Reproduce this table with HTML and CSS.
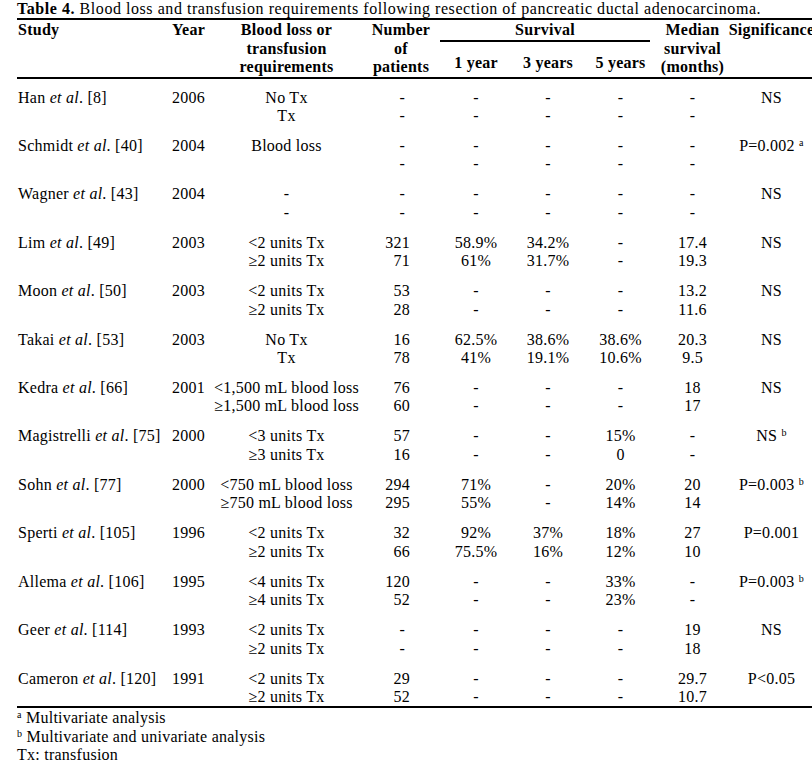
FILE: index.html
```html
<!DOCTYPE html>
<html>
<head>
<meta charset="utf-8">
<link rel="stylesheet" href="styles.css">
</head>
<body>
<div class="page">
  <div class="caption"><b>Table 4.</b> Blood loss and transfusion requirements following resection of pancreatic ductal adenocarcinoma.</div>
  <table class="tbl">
    <colgroup>
      <col class="w-study"><col class="w-year"><col class="w-blood"><col class="w-num">
      <col class="w-s"><col class="w-s"><col class="w-s5"><col class="w-med"><col class="w-sig">
    </colgroup>
    <thead>
      <tr>
        <th rowspan="2" class="c-study">Study</th>
        <th rowspan="2" class="c-year">Year</th>
        <th rowspan="2" class="c-ctr">Blood loss or<br>transfusion<br>requirements</th>
        <th rowspan="2" class="c-numh">Number<br>of<br>patients</th>
        <th colspan="3" class="c-surv"><div class="surv-label">Survival</div></th>
        <th rowspan="2" class="c-ctr">Median<br>survival<br>(months)</th>
        <th rowspan="2" class="c-ctr">Significance</th>
      </tr>
      <tr class="sub">
        <th class="c-ctr">1 year</th>
        <th class="c-ctr">3 years</th>
        <th class="c-ctr">5 years</th>
      </tr>
    </thead>
    <tbody>
      <tr>
        <td class="c-study">Han <i>et al</i>. [8]</td><td class="c-year">2006</td>
        <td class="c-ctr">No Tx<br>Tx</td><td class="c-num nd">-<br>-</td>
        <td class="c-ctr">-<br>-</td><td class="c-ctr">-<br>-</td><td class="c-ctr">-<br>-</td><td class="c-ctr">-<br>-</td>
        <td class="c-ctr">NS</td>
      </tr>
      <tr>
        <td class="c-study">Schmidt <i>et al</i>. [40]</td><td class="c-year">2004</td>
        <td class="c-ctr">Blood loss<br>&nbsp;</td><td class="c-num nd">-<br>-</td>
        <td class="c-ctr">-<br>-</td><td class="c-ctr">-<br>-</td><td class="c-ctr">-<br>-</td><td class="c-ctr">-<br>-</td>
        <td class="c-ctr">P=0.002 <sup class="fn">a</sup></td>
      </tr>
      <tr>
        <td class="c-study">Wagner <i>et al</i>. [43]</td><td class="c-year">2004</td>
        <td class="c-ctr">-<br>-</td><td class="c-num nd">-<br>-</td>
        <td class="c-ctr">-<br>-</td><td class="c-ctr">-<br>-</td><td class="c-ctr">-<br>-</td><td class="c-ctr">-<br>-</td>
        <td class="c-ctr">NS</td>
      </tr>
      <tr>
        <td class="c-study">Lim <i>et al</i>. [49]</td><td class="c-year">2003</td>
        <td class="c-ctr">&lt;2 units Tx<br>≥2 units Tx</td><td class="c-num">321<br>71</td>
        <td class="c-ctr">58.9%<br>61%</td><td class="c-ctr">34.2%<br>31.7%</td><td class="c-ctr">-<br>-</td><td class="c-ctr">17.4<br>19.3</td>
        <td class="c-ctr">NS</td>
      </tr>
      <tr>
        <td class="c-study">Moon <i>et al</i>. [50]</td><td class="c-year">2003</td>
        <td class="c-ctr">&lt;2 units Tx<br>≥2 units Tx</td><td class="c-num">53<br>28</td>
        <td class="c-ctr">-<br>-</td><td class="c-ctr">-<br>-</td><td class="c-ctr">-<br>-</td><td class="c-ctr">13.2<br>11.6</td>
        <td class="c-ctr">NS</td>
      </tr>
      <tr>
        <td class="c-study">Takai <i>et al</i>. [53]</td><td class="c-year">2003</td>
        <td class="c-ctr">No Tx<br>Tx</td><td class="c-num">16<br>78</td>
        <td class="c-ctr">62.5%<br>41%</td><td class="c-ctr">38.6%<br>19.1%</td><td class="c-ctr">38.6%<br>10.6%</td><td class="c-ctr">20.3<br>9.5</td>
        <td class="c-ctr">NS</td>
      </tr>
      <tr>
        <td class="c-study">Kedra <i>et al</i>. [66]</td><td class="c-year">2001</td>
        <td class="c-ctr">&lt;1,500 mL blood loss<br>≥1,500 mL blood loss</td><td class="c-num">76<br>60</td>
        <td class="c-ctr">-<br>-</td><td class="c-ctr">-<br>-</td><td class="c-ctr">-<br>-</td><td class="c-ctr">18<br>17</td>
        <td class="c-ctr">NS</td>
      </tr>
      <tr>
        <td class="c-study">Magistrelli <i>et al</i>. [75]</td><td class="c-year">2000</td>
        <td class="c-ctr">&lt;3 units Tx<br>≥3 units Tx</td><td class="c-num">57<br>16</td>
        <td class="c-ctr">-<br>-</td><td class="c-ctr">-<br>-</td><td class="c-ctr">15%<br>0</td><td class="c-ctr">-<br>-</td>
        <td class="c-ctr">NS <sup class="fn">b</sup></td>
      </tr>
      <tr>
        <td class="c-study">Sohn <i>et al</i>. [77]</td><td class="c-year">2000</td>
        <td class="c-ctr">&lt;750 mL blood loss<br>≥750 mL blood loss</td><td class="c-num">294<br>295</td>
        <td class="c-ctr">71%<br>55%</td><td class="c-ctr">-<br>-</td><td class="c-ctr">20%<br>14%</td><td class="c-ctr">20<br>14</td>
        <td class="c-ctr">P=0.003 <sup class="fn">b</sup></td>
      </tr>
      <tr>
        <td class="c-study">Sperti <i>et al</i>. [105]</td><td class="c-year">1996</td>
        <td class="c-ctr">&lt;2 units Tx<br>≥2 units Tx</td><td class="c-num">32<br>66</td>
        <td class="c-ctr">92%<br>75.5%</td><td class="c-ctr">37%<br>16%</td><td class="c-ctr">18%<br>12%</td><td class="c-ctr">27<br>10</td>
        <td class="c-ctr">P=0.001</td>
      </tr>
      <tr>
        <td class="c-study">Allema <i>et al</i>. [106]</td><td class="c-year">1995</td>
        <td class="c-ctr">&lt;4 units Tx<br>≥4 units Tx</td><td class="c-num">120<br>52</td>
        <td class="c-ctr">-<br>-</td><td class="c-ctr">-<br>-</td><td class="c-ctr">33%<br>23%</td><td class="c-ctr">-<br>-</td>
        <td class="c-ctr">P=0.003 <sup class="fn">b</sup></td>
      </tr>
      <tr>
        <td class="c-study">Geer <i>et al</i>. [114]</td><td class="c-year">1993</td>
        <td class="c-ctr">&lt;2 units Tx<br>≥2 units Tx</td><td class="c-num nd">-<br>-</td>
        <td class="c-ctr">-<br>-</td><td class="c-ctr">-<br>-</td><td class="c-ctr">-<br>-</td><td class="c-ctr">19<br>18</td>
        <td class="c-ctr">NS</td>
      </tr>
      <tr>
        <td class="c-study">Cameron <i>et al</i>. [120]</td><td class="c-year">1991</td>
        <td class="c-ctr">&lt;2 units Tx<br>≥2 units Tx</td><td class="c-num">29<br>52</td>
        <td class="c-ctr">-<br>-</td><td class="c-ctr">-<br>-</td><td class="c-ctr">-<br>-</td><td class="c-ctr">29.7<br>10.7</td>
        <td class="c-ctr">P&lt;0.05</td>
      </tr>
    </tbody>
  </table>
  <div class="notes">
    <div><sup class="fn">a</sup> Multivariate analysis</div>
    <div><sup class="fn">b</sup> Multivariate and univariate analysis</div>
    <div>Tx: transfusion</div>
  </div>
</div>
</body>
</html>
```

FILE: styles.css
```css
html, body {
  margin: 0;
  padding: 0;
  background: #fff;
  overflow: hidden;
}

.page {
  padding-left: 17px;
  font-family: "Liberation Serif", "Times New Roman", serif;
  font-size: 16px;
  line-height: 18.4px;
  letter-spacing: 0.25px;
  color: #000;
  width: 900px;
}

.caption {
  white-space: nowrap;
  letter-spacing: 0.55px;
}

.tbl {
  border-collapse: collapse;
  table-layout: fixed;
  width: 798px;
  border-top: 2px solid #000;
  border-bottom: 2px solid #000;
}

.w-study { width: 151px; }
.w-year { width: 40px; }
.w-blood { width: 157px; }
.w-num { width: 75px; }
.w-s { width: 72px; }
.w-s5 { width: 73px; }
.w-med { width: 71px; }
.w-sig { width: 87px; }

.tbl thead {
  border-bottom: 2px solid #000;
}

.tbl th {
  font-weight: bold;
  padding: 1px 0 0 0;
  vertical-align: top;
  white-space: nowrap;
}

.tbl tr.sub th {
  vertical-align: middle;
  padding-top: 0;
}

.tbl td {
  padding: 11.6px 0 0 0;
  vertical-align: top;
  white-space: nowrap;
}

.tbl tbody tr:first-child td {
  padding-top: 10px;
}

.c-study {
  text-align: left;
  padding-left: 1px !important;
}

.c-year {
  text-align: left;
  padding-left: 4px !important;
}

.c-ctr {
  text-align: center;
}

.c-numh {
  text-align: center;
  padding-right: 3px !important;
}

.c-num {
  text-align: right;
  padding-right: 30px !important;
}

.c-num.nd {
  padding-right: 35px !important;
}

.c-surv {
  text-align: center;
}

.surv-label {
  border-bottom: 2px solid #000;
  margin-right: 7px;
}

.fn {
  font-size: 10px;
  line-height: 0;
  vertical-align: 5px;
}

.notes {
  padding-top: 1px;
  line-height: 18.4px;
}
```
